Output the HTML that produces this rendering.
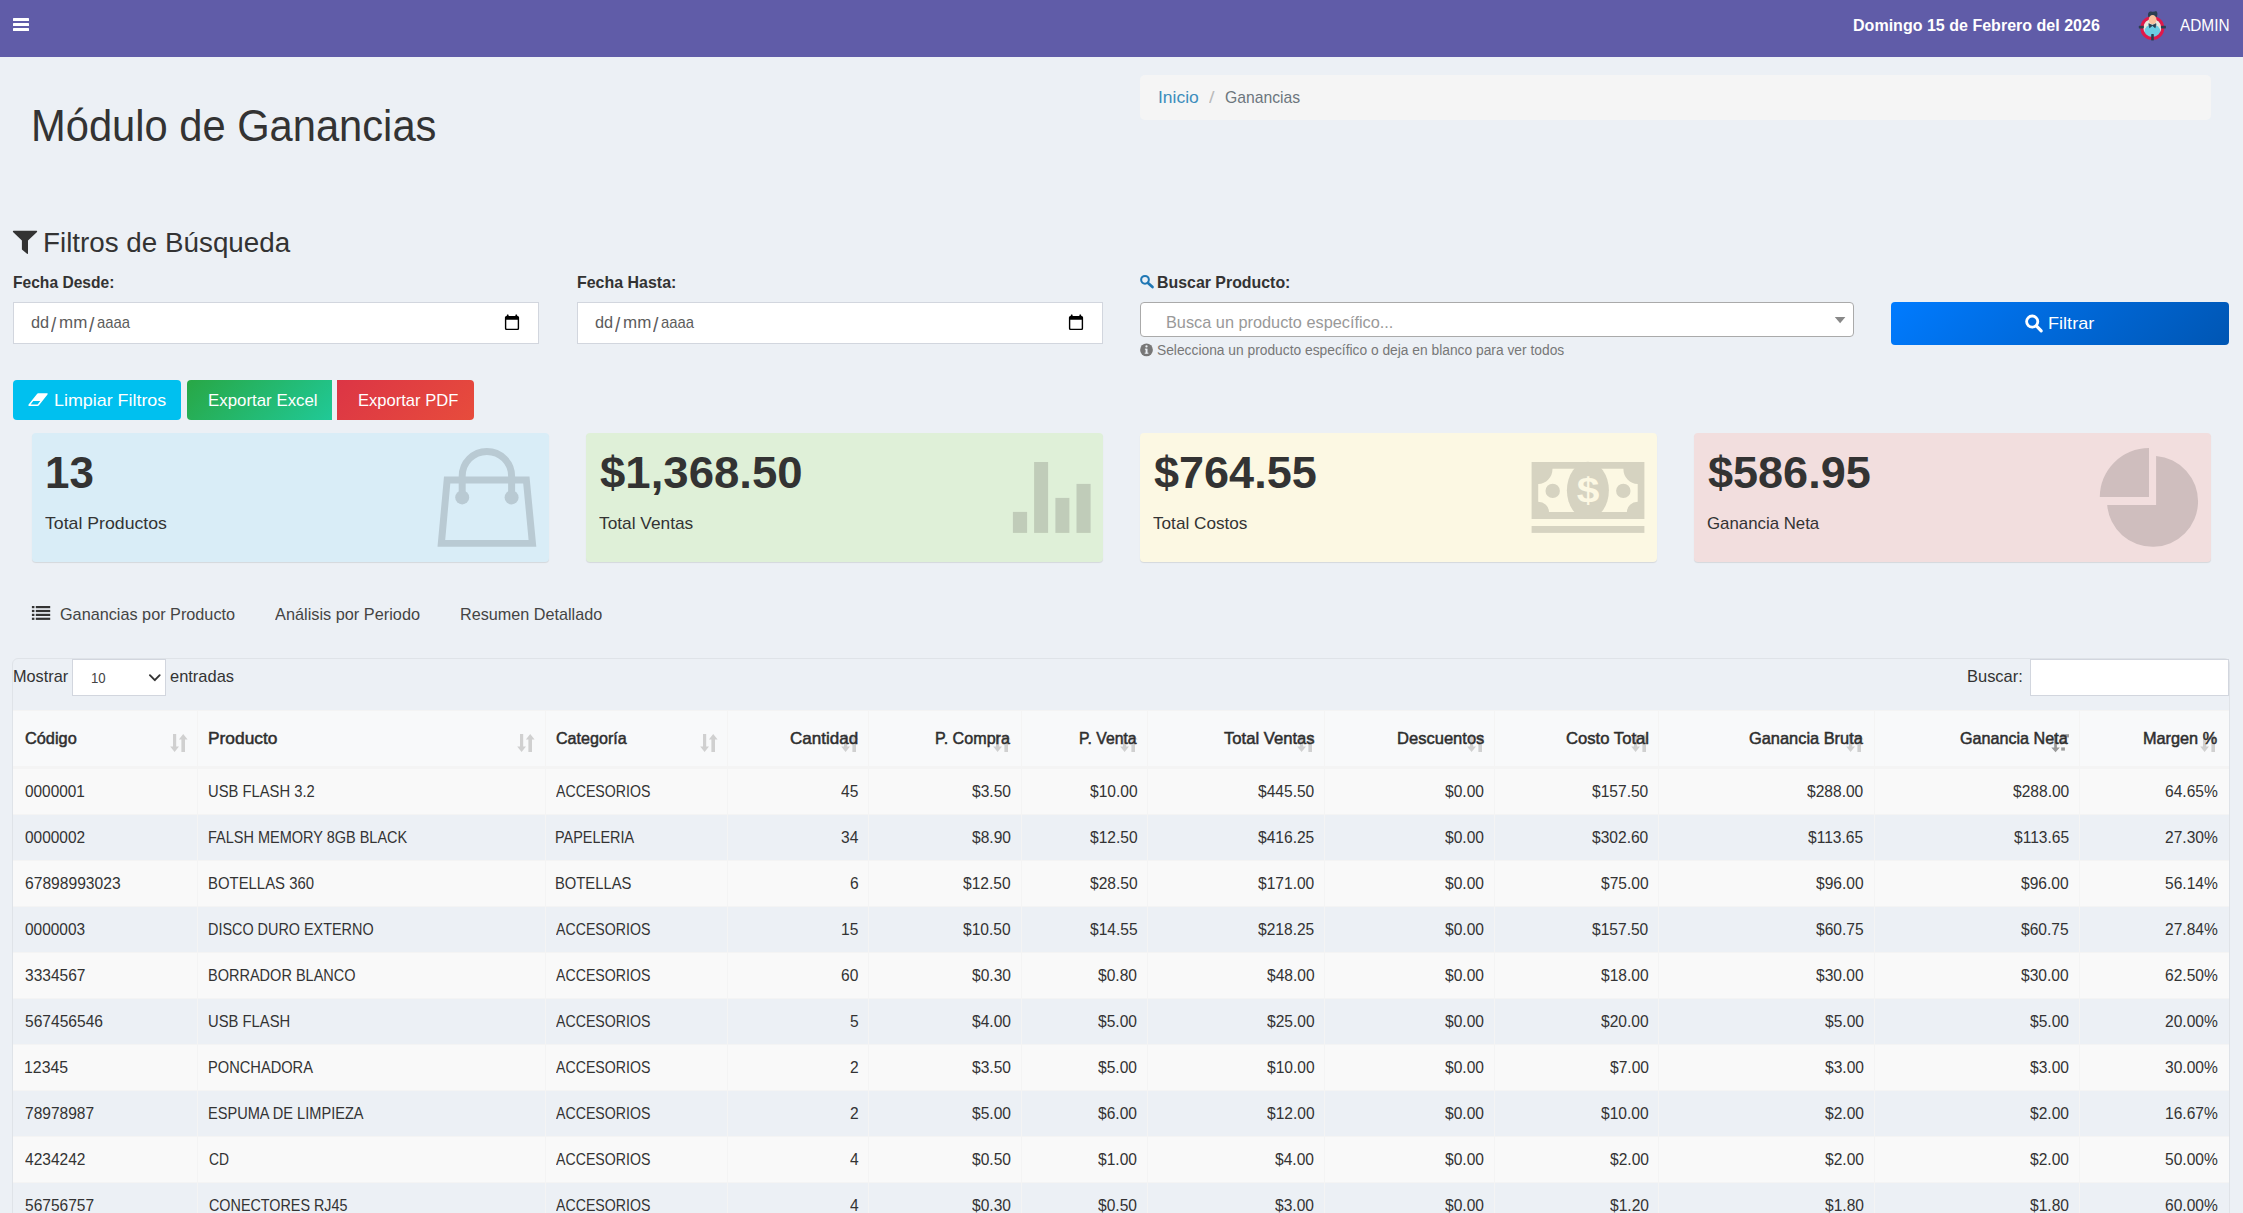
<!DOCTYPE html>
<html lang="es"><head><meta charset="utf-8"><title>Módulo de Ganancias</title>
<style>
html,body{margin:0;padding:0}
html{width:2243px;height:1213px;overflow:hidden}
body{width:2243px;height:1213px;overflow:hidden;position:relative;background:#ecf0f5;font-family:"Liberation Sans",sans-serif;color:#333}
.a{position:absolute;box-sizing:border-box}
.t{position:absolute;white-space:pre;line-height:1;transform-origin:0 0;font-family:"Liberation Sans",sans-serif}
svg{position:absolute;overflow:visible}
.nav{left:0;top:0;width:2243px;height:57px;background:#605ca8}
.crumb{left:1140px;top:75px;width:1071px;height:45px;background:#f5f5f5;border-radius:5px}
.inp{background:#fff;border:1px solid #d2d6de}
.sel2{background:#fff;border:1px solid #aaa;border-radius:4px}
.btn{border-radius:4px}
.sbox{top:433px;height:129px;border-radius:4px;box-shadow:0 1px 1px rgba(0,0,0,.1)}
.row{left:13px;width:2216px;height:46px;border-top:1px solid #f4f4f4}
.odd{background:#f9f9f9}
.vl{top:710px;width:1px;height:520px;background:#f4f4f4}
h1.t,h3.t,p.t,label.t,small.t,b.t,a.t{margin:0;padding:0;font-weight:400;text-decoration:none;display:block}
#app{position:absolute;left:0;top:0;width:2243px;height:1213px;overflow:hidden}

</style></head>
<body>
<div id="app">
<nav>
<div class="a nav"></div>
<svg style="left:0;top:0" width="60" height="57"><rect x="13" y="18" width="16" height="3" rx=".6" fill="#fff"/><rect x="13" y="23" width="16" height="3" rx=".6" fill="#fff"/><rect x="13" y="28" width="16" height="3" rx=".6" fill="#fff"/></svg>
<svg style="left:2136px;top:9px" width="32" height="34" viewBox="2136 9 32 34">
 <circle cx="2152.3" cy="27.9" r="9.4" fill="#e9e9df"/>
 <ellipse cx="2152.4" cy="31.6" rx="8" ry="7.2" fill="#6bcde4"/>
 <circle cx="2152.3" cy="27.9" r="10.5" fill="none" stroke="#e0184a" stroke-width="3"/>
 <path d="M2148.3 17 C2147.2 12.8 2149.3 11.2 2152 11.7 C2153.8 11.9 2155 11.5 2156.2 11 C2157.9 12.4 2157.6 15 2156.8 17 Z" fill="#2c3e50"/>
 <ellipse cx="2152.6" cy="19.8" rx="3.9" ry="4.7" fill="#f9c29e"/>
 <path d="M2152.4 25.5 L2148.8 23.7 L2149.6 27.7 Z M2152.4 25.5 L2156 23.7 L2155.2 27.7 Z" fill="#2c3e50" stroke="#2c3e50" stroke-width=".8" stroke-linejoin="round"/>
 <rect x="2138.8" y="25.8" width="5" height="2.6" rx=".6" fill="#2c3e50"/>
 <rect x="2160.9" y="25.8" width="5" height="2.6" rx=".6" fill="#2c3e50"/>
 <rect x="2151.2" y="34" width="2.6" height="6.6" rx=".6" fill="#2c3e50"/>
</svg>
<span class="t" style="font-size:17.2px;top:17.38px;color:#fff;font-weight:700;left:1852.87px;transform:scaleX(0.9330);">Domingo 15 de Febrero del 2026</span>
<span class="t" style="font-size:17.0px;top:16.55px;color:#fff;left:2180.40px;transform:scaleX(0.9047);">ADMIN</span>
</nav>
<header>
<div class="a crumb"></div>
<h1 class="t" style="font-size:44.8px;top:102.92px;color:#333;left:30.91px;transform:scaleX(0.9302);">Módulo de Ganancias</h1>
<a class="t" style="font-size:16.6px;top:89.89px;color:#3c8dbc;left:1158.15px;transform:scaleX(1.0531);">Inicio</a>
<span class="t" style="font-size:16.6px;top:89.89px;color:#bbb;left:1209.00px;transform:scaleX(1.2000);">/</span>
<span class="t" style="font-size:16.6px;top:89.89px;color:#6c757d;left:1225.40px;transform:scaleX(0.9477);">Ganancias</span>
</header>
<section class="filters">
<svg style="left:0;top:220px" width="60" height="45" viewBox="0 220 60 45"><path d="M13.4 230.8 H36.7 Q37.6 231 37 231.9 L28 240.6 V253.6 Q27.8 254.4 27 253.8 L22.2 249.8 Q21.9 249.5 21.9 249 V240.6 L13 231.9 Q12.5 231 13.4 230.8 Z" fill="#333"/></svg>
<svg style="left:1138px;top:273px" width="18" height="18" viewBox="1138 273 18 18"><circle cx="1145" cy="279.8" r="3.85" fill="none" stroke="#1f77b4" stroke-width="2.05"/><path d="M1148 282.9 L1152.5 287.1" stroke="#1f77b4" stroke-width="2.7" stroke-linecap="round"/></svg>
<div class="a inp" style="left:13px;top:302px;width:526px;height:42px"></div>
<div class="a inp" style="left:577px;top:302px;width:526px;height:42px"></div>
<svg style="left:503px;top:313px" width="18" height="20" viewBox="0 0 18 20"><path d="M3.4 3.1 H14.6 Q16.1 3.1 16.1 4.6 V15.6 Q16.1 17.1 14.6 17.1 H3.4 Q1.9 17.1 1.9 15.6 V4.6 Q1.9 3.1 3.4 3.1 Z M3.3 6.8 V15.3 Q3.3 15.7 3.7 15.7 H14.3 Q14.7 15.7 14.7 15.3 V6.8 Z" fill="#000" fill-rule="evenodd"/><rect x="3.8" y="1.6" width="1.8" height="2.4" rx=".4" fill="#000"/><rect x="12.4" y="1.6" width="1.8" height="2.4" rx=".4" fill="#000"/></svg>
<svg style="left:1067px;top:313px" width="18" height="20" viewBox="0 0 18 20"><path d="M3.4 3.1 H14.6 Q16.1 3.1 16.1 4.6 V15.6 Q16.1 17.1 14.6 17.1 H3.4 Q1.9 17.1 1.9 15.6 V4.6 Q1.9 3.1 3.4 3.1 Z M3.3 6.8 V15.3 Q3.3 15.7 3.7 15.7 H14.3 Q14.7 15.7 14.7 15.3 V6.8 Z" fill="#000" fill-rule="evenodd"/><rect x="3.8" y="1.6" width="1.8" height="2.4" rx=".4" fill="#000"/><rect x="12.4" y="1.6" width="1.8" height="2.4" rx=".4" fill="#000"/></svg>
<div class="a sel2" style="left:1140px;top:302px;width:714px;height:35px"></div>
<svg style="left:1832px;top:314px" width="16" height="12" viewBox="1832 314 16 12"><path d="M1834.8 317 H1845.4 L1840.1 323.2 Z" fill="#888"/></svg>
<svg style="left:1138px;top:341px" width="18" height="18" viewBox="1138 341 18 18"><circle cx="1146.5" cy="349.9" r="6.4" fill="#777"/><rect x="1145.6" y="348.7" width="1.9" height="4.6" fill="#ecf0f5"/><rect x="1144.9" y="348.7" width="1.6" height="1" fill="#ecf0f5"/><rect x="1144.7" y="352.7" width="3.7" height="1" fill="#ecf0f5"/><circle cx="1146.5" cy="346.4" r="1.15" fill="#ecf0f5"/></svg>
<div class="a btn" style="left:1891px;top:302px;width:338px;height:43px;background:linear-gradient(135deg,#007bff,#0056b3)"></div>
<svg style="left:2022px;top:312px" width="24" height="24" viewBox="2022 312 24 24"><circle cx="2032.2" cy="321.6" r="5.6" fill="none" stroke="#fff" stroke-width="2.8"/><path d="M2036.6 326.2 L2041.2 330.8" stroke="#fff" stroke-width="3.2" stroke-linecap="round"/></svg>
<div class="a btn" style="left:13px;top:380px;width:168px;height:40px;background:#00c0ef"></div>
<svg style="left:26px;top:390px" width="26" height="20" viewBox="26 390 26 20"><path d="M38.2 393.3 H46.9 Q48.4 393.3 47.5 394.6 L39 405.3 Q38.5 405.9 37.7 405.9 H29.2 Q27.6 405.9 28.6 404.6 L37 393.9 Q37.5 393.3 38.2 393.3 Z M33.3 401.1 L30.6 404.6 H37.6 L40.3 401.1 Z" fill="#fff" fill-rule="evenodd"/></svg>
<div class="a" style="left:187px;top:380px;width:145px;height:40px;border-radius:4px 0 0 4px;background:linear-gradient(135deg,#28a745,#20c997)"></div>
<div class="a" style="left:337px;top:380px;width:137px;height:40px;border-radius:0 4px 4px 0;background:linear-gradient(135deg,#dc3545,#e74c3c)"></div>
<h3 class="t" style="font-size:28.4px;top:227.86px;color:#333;left:43.04px;transform:scaleX(0.9788);">Filtros de Búsqueda</h3>
<label class="t" style="font-size:16.6px;top:274.89px;color:#333;font-weight:700;left:13.46px;transform:scaleX(0.9395);">Fecha Desde:</label>
<label class="t" style="font-size:16.6px;top:274.89px;color:#333;font-weight:700;left:576.54px;transform:scaleX(0.9617);">Fecha Hasta:</label>
<label class="t" style="font-size:16.6px;top:274.89px;color:#333;font-weight:700;left:1156.54px;transform:scaleX(0.9583);">Buscar Producto:</label>
<span class="t" style="font-size:16.6px;top:314.89px;color:#5c5c5c;left:31.00px;transform:scaleX(0.9820);">dd</span>
<span class="t" style="font-size:20.8px;top:315.32px;color:#5c5c5c;left:51.10px;transform:scaleX(0.9000);">/</span>
<span class="t" style="font-size:16.6px;top:314.89px;color:#5c5c5c;left:58.78px;transform:scaleX(1.0224);">mm</span>
<span class="t" style="font-size:20.8px;top:315.32px;color:#5c5c5c;left:89.10px;transform:scaleX(0.9333);">/</span>
<span class="t" style="font-size:16.6px;top:314.89px;color:#5c5c5c;left:97.10px;transform:scaleX(0.8942);">aaaa</span>
<span class="t" style="font-size:16.6px;top:314.89px;color:#5c5c5c;left:595.00px;transform:scaleX(0.9820);">dd</span>
<span class="t" style="font-size:20.8px;top:315.32px;color:#5c5c5c;left:615.10px;transform:scaleX(0.9000);">/</span>
<span class="t" style="font-size:16.6px;top:314.89px;color:#5c5c5c;left:622.78px;transform:scaleX(1.0224);">mm</span>
<span class="t" style="font-size:20.8px;top:315.32px;color:#5c5c5c;left:653.10px;transform:scaleX(0.9333);">/</span>
<span class="t" style="font-size:16.6px;top:314.89px;color:#5c5c5c;left:661.10px;transform:scaleX(0.8942);">aaaa</span>
<span class="t" style="font-size:16.6px;top:314.89px;color:#999;left:1166.02px;transform:scaleX(0.9821);">Busca un producto específico...</span>
<small class="t" style="font-size:14px;top:343.10px;color:#777;left:1156.50px;transform:scaleX(0.9853);">Selecciona un producto específico o deja en blanco para ver todos</small>
<b class="t" role="button" style="font-size:16.6px;top:315.89px;color:#fff;left:2048.21px;transform:scaleX(1.0914);">Filtrar</b>
<b class="t" role="button" style="font-size:16.6px;top:392.89px;color:#fff;left:53.82px;transform:scaleX(1.0769);">Limpiar Filtros</b>
<b class="t" role="button" style="font-size:16.6px;top:392.89px;color:#fff;left:208.18px;transform:scaleX(1.0159);">Exportar Excel</b>
<b class="t" role="button" style="font-size:16.6px;top:392.89px;color:#fff;left:358.00px;transform:scaleX(0.9982);">Exportar PDF</b>
</section>
<section class="stats">
<div class="a sbox" style="left:32px;width:517px;background:#d9edf7"></div>
<div class="a sbox" style="left:586px;width:517px;background:#dff0d8"></div>
<div class="a sbox" style="left:1140px;width:517px;background:#fcf8e3"></div>
<div class="a sbox" style="left:1694px;width:517px;background:#f2dede"></div>
<svg style="left:430px;top:440px" width="115" height="115" viewBox="430 440 115 115"><path fill="#b9cad3" fill-rule="evenodd" d="M444 476.5 H529.5 L536.3 546.8 H437.5 Z M450.3 483.5 L445.2 540 H528.6 L523.2 483.5 Z"/><path d="M462.2 497 V476.1 A24.7 24.7 0 0 1 511.6 476.1 V497" fill="none" stroke="#b9cad3" stroke-width="7"/><circle cx="462.2" cy="497.4" r="7" fill="#b9cad3"/><circle cx="511.6" cy="497.4" r="7" fill="#b9cad3"/></svg>
<svg style="left:1005px;top:455px" width="95" height="85" viewBox="1005 455 95 85"><g fill="#c0ccb9"><rect x="1012.9" y="511.9" width="14.2" height="21"/><rect x="1034.1" y="462" width="14" height="70.9"/><rect x="1055.4" y="497.9" width="14" height="35"/><rect x="1076.5" y="483.9" width="14.1" height="49"/></g></svg>
<svg style="left:1525px;top:455px" width="125" height="85" viewBox="1525 455 125 85"><g fill="#d6d3c1"><path fill-rule="evenodd" d="M1531.6 461.9 H1644.4 V518.9 H1531.6 Z M1552.5 468.8 H1623.4 A14.3 15.3 0 0 0 1637.7 484.1 V501.8 A10.8 10.2 0 0 0 1626.9 512 H1549 A10.8 10.2 0 0 0 1538.2 501.8 V484.1 A14.3 15.3 0 0 0 1552.5 468.8 Z"/><ellipse cx="1587.9" cy="490.3" rx="21" ry="28.5"/><circle cx="1552.7" cy="490.9" r="7.2"/><circle cx="1623.3" cy="490.9" r="7.2"/><rect x="1531.6" y="526" width="112.8" height="6.9"/></g><text x="1588" y="501.6" font-family="Liberation Sans, sans-serif" font-weight="700" font-size="34.5" fill="#fcf8e3" text-anchor="middle" transform="translate(1588 0) scale(1.18 1) translate(-1588 0)">$</text></svg>
<svg style="left:2095px;top:445px" width="108" height="106" viewBox="2095 445 108 106"><g fill="#cfbebe"><path d="M2149 496.9 H2099.8 A49.2 48.8 0 0 1 2149 448.1 Z"/><path d="M2156.1 456 A45.5 45.5 0 1 1 2107.2 505 H2156.1 Z"/></g></svg>
<h3 class="t" style="font-size:44.8px;top:449.92px;color:#333;font-weight:700;left:44.94px;transform:scaleX(0.9805);">13</h3>
<h3 class="t" style="font-size:44.8px;top:449.92px;color:#333;font-weight:700;left:600.00px;transform:scaleX(1.0168);">$1,368.50</h3>
<h3 class="t" style="font-size:44.8px;top:449.92px;color:#333;font-weight:700;left:1154.20px;transform:scaleX(1.0049);">$764.55</h3>
<h3 class="t" style="font-size:44.8px;top:449.92px;color:#333;font-weight:700;left:1708.00px;transform:scaleX(1.0049);">$586.95</h3>
<p class="t" style="font-size:16.6px;top:515.89px;color:#333;left:45.40px;transform:scaleX(1.0660);">Total Productos</p>
<p class="t" style="font-size:16.6px;top:515.89px;color:#333;left:599.20px;transform:scaleX(1.0421);">Total Ventas</p>
<p class="t" style="font-size:16.6px;top:515.89px;color:#333;left:1153.20px;transform:scaleX(1.0340);">Total Costos</p>
<p class="t" style="font-size:16.6px;top:515.89px;color:#333;left:1707.00px;transform:scaleX(1.0138);">Ganancia Neta</p>
</section>
<section class="report">
<svg style="left:30px;top:604px" width="22" height="18" viewBox="30 604 22 18"><g fill="#333"><rect x="31.9" y="606" width="2.5" height="2.2"/><rect x="35.8" y="606" width="14.4" height="2.2"/><rect x="31.9" y="609.9" width="2.5" height="2.2"/><rect x="35.8" y="609.9" width="14.4" height="2.2"/><rect x="31.9" y="613.8" width="2.5" height="2.2"/><rect x="35.8" y="613.8" width="14.4" height="2.2"/><rect x="31.9" y="617.7" width="2.5" height="2.2"/><rect x="35.8" y="617.7" width="14.4" height="2.2"/></g></svg>
<div class="a" style="left:12px;top:658px;width:2218px;height:600px;border:1px solid #dfe3e8;border-radius:6px"></div>
<div class="a inp" style="left:72px;top:659px;width:94px;height:37px"></div>
<svg style="left:146px;top:670px" width="18" height="16" viewBox="146 670 18 16"><path d="M149.9 675.2 L154.8 680.2 L159.7 675.2" fill="none" stroke="#333" stroke-width="1.9" stroke-linecap="round" stroke-linejoin="round"/></svg>
<div class="a inp" style="left:2030px;top:659px;width:199px;height:37px"></div>
<div class="a" style="left:13px;top:710px;width:2216px;height:56px;background:#f8f9fa;border-top:1px solid #f4f4f4"></div>
<div class="a" style="left:13px;top:766px;width:2216px;height:3px;background:#f4f4f4"></div>
<div class="a row odd" style="top:768px;height:47px"></div>
<div class="a row" style="top:814px;height:47px"></div>
<div class="a row odd" style="top:860px;height:47px"></div>
<div class="a row" style="top:906px;height:47px"></div>
<div class="a row odd" style="top:952px;height:47px"></div>
<div class="a row" style="top:998px;height:47px"></div>
<div class="a row odd" style="top:1044px;height:47px"></div>
<div class="a row" style="top:1090px;height:47px"></div>
<div class="a row odd" style="top:1136px;height:47px"></div>
<div class="a row" style="top:1182px;height:47px"></div>
<div class="a vl" style="left:197px"></div>
<div class="a vl" style="left:545px"></div>
<div class="a vl" style="left:727px"></div>
<div class="a vl" style="left:868px"></div>
<div class="a vl" style="left:1021px"></div>
<div class="a vl" style="left:1147px"></div>
<div class="a vl" style="left:1324px"></div>
<div class="a vl" style="left:1494px"></div>
<div class="a vl" style="left:1658px"></div>
<div class="a vl" style="left:1874px"></div>
<div class="a vl" style="left:2079px"></div>
<svg style="left:169.8px;top:734.2px" width="18" height="19" viewBox="0 0 18 19"><path d="M3 0 H6.2 V12.6 H9 L4.6 18 L0.2 12.6 H3 Z" fill="#d0d0d0"/><path d="M11.4 18 H15 V5.4 H17.6 L13.2 0 L8.9 5.4 H11.4 Z" fill="#d0d0d0"/></svg>
<svg style="left:517.3px;top:734.2px" width="18" height="19" viewBox="0 0 18 19"><path d="M3 0 H6.2 V12.6 H9 L4.6 18 L0.2 12.6 H3 Z" fill="#d0d0d0"/><path d="M11.4 18 H15 V5.4 H17.6 L13.2 0 L8.9 5.4 H11.4 Z" fill="#d0d0d0"/></svg>
<svg style="left:699.8px;top:734.2px" width="18" height="19" viewBox="0 0 18 19"><path d="M3 0 H6.2 V12.6 H9 L4.6 18 L0.2 12.6 H3 Z" fill="#d0d0d0"/><path d="M11.4 18 H15 V5.4 H17.6 L13.2 0 L8.9 5.4 H11.4 Z" fill="#d0d0d0"/></svg>
<svg style="left:840.8px;top:734.2px" width="18" height="19" viewBox="0 0 18 19"><path d="M3 0 H6.2 V12.6 H9 L4.6 18 L0.2 12.6 H3 Z" fill="#d0d0d0"/><path d="M11.4 18 H15 V5.4 H17.6 L13.2 0 L8.9 5.4 H11.4 Z" fill="#d0d0d0"/></svg>
<svg style="left:993.2px;top:734.2px" width="18" height="19" viewBox="0 0 18 19"><path d="M3 0 H6.2 V12.6 H9 L4.6 18 L0.2 12.6 H3 Z" fill="#d0d0d0"/><path d="M11.4 18 H15 V5.4 H17.6 L13.2 0 L8.9 5.4 H11.4 Z" fill="#d0d0d0"/></svg>
<svg style="left:1119.5px;top:734.2px" width="18" height="19" viewBox="0 0 18 19"><path d="M3 0 H6.2 V12.6 H9 L4.6 18 L0.2 12.6 H3 Z" fill="#d0d0d0"/><path d="M11.4 18 H15 V5.4 H17.6 L13.2 0 L8.9 5.4 H11.4 Z" fill="#d0d0d0"/></svg>
<svg style="left:1296.5px;top:734.2px" width="18" height="19" viewBox="0 0 18 19"><path d="M3 0 H6.2 V12.6 H9 L4.6 18 L0.2 12.6 H3 Z" fill="#d0d0d0"/><path d="M11.4 18 H15 V5.4 H17.6 L13.2 0 L8.9 5.4 H11.4 Z" fill="#d0d0d0"/></svg>
<svg style="left:1466.5px;top:734.2px" width="18" height="19" viewBox="0 0 18 19"><path d="M3 0 H6.2 V12.6 H9 L4.6 18 L0.2 12.6 H3 Z" fill="#d0d0d0"/><path d="M11.4 18 H15 V5.4 H17.6 L13.2 0 L8.9 5.4 H11.4 Z" fill="#d0d0d0"/></svg>
<svg style="left:1630.8px;top:734.2px" width="18" height="19" viewBox="0 0 18 19"><path d="M3 0 H6.2 V12.6 H9 L4.6 18 L0.2 12.6 H3 Z" fill="#d0d0d0"/><path d="M11.4 18 H15 V5.4 H17.6 L13.2 0 L8.9 5.4 H11.4 Z" fill="#d0d0d0"/></svg>
<svg style="left:1845.8px;top:734.2px" width="18" height="19" viewBox="0 0 18 19"><path d="M3 0 H6.2 V12.6 H9 L4.6 18 L0.2 12.6 H3 Z" fill="#d0d0d0"/><path d="M11.4 18 H15 V5.4 H17.6 L13.2 0 L8.9 5.4 H11.4 Z" fill="#d0d0d0"/></svg>
<svg style="left:2051px;top:734px" width="19" height="19" viewBox="2051 734 19 19"><g fill="#999"><path d="M2054.2 734.2 H2056.9 V747.6 H2059.8 L2055.55 752.2 L2051.3 747.6 H2054.2 Z"/><rect x="2061.2" y="734.2" width="7.8" height="3.2"/><rect x="2061.2" y="740.8" width="5.3" height="3.2"/><rect x="2061.2" y="747.4" width="3.7" height="3.2"/></g></svg>
<svg style="left:2200.3px;top:734.2px" width="18" height="19" viewBox="0 0 18 19"><path d="M3 0 H6.2 V12.6 H9 L4.6 18 L0.2 12.6 H3 Z" fill="#d0d0d0"/><path d="M11.4 18 H15 V5.4 H17.6 L13.2 0 L8.9 5.4 H11.4 Z" fill="#d0d0d0"/></svg>
<a class="t" role="tab" style="font-size:16.6px;top:606.89px;color:#444;left:59.90px;transform:scaleX(0.9781);">Ganancias por Producto</a>
<a class="t" role="tab" style="font-size:16.6px;top:606.89px;color:#444;left:275.20px;transform:scaleX(0.9827);">Análisis por Periodo</a>
<a class="t" role="tab" style="font-size:16.6px;top:606.89px;color:#444;left:460.02px;transform:scaleX(0.9757);">Resumen Detallado</a>
<label class="t" style="font-size:16.6px;top:668.89px;color:#333;left:13.22px;transform:scaleX(0.9800);">Mostrar</label>
<span class="t" style="font-size:13.8px;top:672.27px;color:#444;left:90.65px;transform:scaleX(0.9541);">10</span>
<label class="t" style="font-size:16.6px;top:668.89px;color:#333;left:170.30px;transform:scaleX(0.9910);">entradas</label>
<label class="t" style="font-size:16.6px;top:668.89px;color:#333;left:1967.41px;transform:scaleX(0.9919);">Buscar:</label>
<span class="t" role="columnheader" style="font-size:16.6px;top:730.89px;color:#2e2e2e;-webkit-text-stroke:0.5px #2e2e2e;left:24.70px;transform:scaleX(0.9836);">Código</span>
<span class="t" role="columnheader" style="font-size:16.6px;top:730.89px;color:#2e2e2e;-webkit-text-stroke:0.5px #2e2e2e;left:207.95px;transform:scaleX(1.0462);">Producto</span>
<span class="t" role="columnheader" style="font-size:16.6px;top:730.89px;color:#2e2e2e;-webkit-text-stroke:0.5px #2e2e2e;left:556.00px;transform:scaleX(0.9695);">Categoría</span>
<span class="t" role="columnheader" style="font-size:16.6px;top:730.89px;color:#2e2e2e;-webkit-text-stroke:0.5px #2e2e2e;left:790.20px;transform:scaleX(1.0258);">Cantidad</span>
<span class="t" role="columnheader" style="font-size:16.6px;top:730.89px;color:#2e2e2e;-webkit-text-stroke:0.5px #2e2e2e;left:935.03px;transform:scaleX(0.9709);">P. Compra</span>
<span class="t" role="columnheader" style="font-size:16.6px;top:730.89px;color:#2e2e2e;-webkit-text-stroke:0.5px #2e2e2e;left:1078.65px;transform:scaleX(0.9508);">P. Venta</span>
<span class="t" role="columnheader" style="font-size:16.6px;top:730.89px;color:#2e2e2e;-webkit-text-stroke:0.5px #2e2e2e;left:1223.60px;transform:scaleX(1.0032);">Total Ventas</span>
<span class="t" role="columnheader" style="font-size:16.6px;top:730.89px;color:#2e2e2e;-webkit-text-stroke:0.5px #2e2e2e;left:1396.90px;transform:scaleX(0.9973);">Descuentos</span>
<span class="t" role="columnheader" style="font-size:16.6px;top:730.89px;color:#2e2e2e;-webkit-text-stroke:0.5px #2e2e2e;left:1565.70px;transform:scaleX(1.0034);">Costo Total</span>
<span class="t" role="columnheader" style="font-size:16.6px;top:730.89px;color:#2e2e2e;-webkit-text-stroke:0.5px #2e2e2e;left:1748.70px;transform:scaleX(0.9873);">Ganancia Bruta</span>
<span class="t" role="columnheader" style="font-size:16.6px;top:730.89px;color:#2e2e2e;-webkit-text-stroke:0.5px #2e2e2e;left:1960.40px;transform:scaleX(0.9725);">Ganancia Neta</span>
<span class="t" role="columnheader" style="font-size:16.6px;top:730.89px;color:#2e2e2e;-webkit-text-stroke:0.5px #2e2e2e;left:2143.42px;transform:scaleX(0.9803);">Margen %</span>
<span class="t" role="cell" style="font-size:16.6px;top:783.89px;color:#333;left:24.70px;transform:scaleX(0.9274);">0000001</span>
<span class="t" role="cell" style="font-size:16.6px;top:783.89px;color:#333;left:208.11px;transform:scaleX(0.8899);">USB FLASH 3.2</span>
<span class="t" role="cell" style="font-size:16.6px;top:783.89px;color:#333;left:556.00px;transform:scaleX(0.8537);">ACCESORIOS</span>
<span class="t" role="cell" style="font-size:16.6px;top:783.89px;color:#333;left:841.00px;transform:scaleX(0.9380);">45</span>
<span class="t" role="cell" style="font-size:16.6px;top:783.89px;color:#333;left:971.96px;transform:scaleX(0.9380);">$3.50</span>
<span class="t" role="cell" style="font-size:16.6px;top:783.89px;color:#333;left:1089.61px;transform:scaleX(0.9380);">$10.00</span>
<span class="t" role="cell" style="font-size:16.6px;top:783.89px;color:#333;left:1257.95px;transform:scaleX(0.9380);">$445.50</span>
<span class="t" role="cell" style="font-size:16.6px;top:783.89px;color:#333;left:1445.26px;transform:scaleX(0.9380);">$0.00</span>
<span class="t" role="cell" style="font-size:16.6px;top:783.89px;color:#333;left:1592.25px;transform:scaleX(0.9380);">$157.50</span>
<span class="t" role="cell" style="font-size:16.6px;top:783.89px;color:#333;left:1807.25px;transform:scaleX(0.9380);">$288.00</span>
<span class="t" role="cell" style="font-size:16.6px;top:783.89px;color:#333;left:2012.75px;transform:scaleX(0.9380);">$288.00</span>
<span class="t" role="cell" style="font-size:16.6px;top:783.89px;color:#333;left:2164.78px;transform:scaleX(0.9380);">64.65%</span>
<span class="t" role="cell" style="font-size:16.6px;top:829.89px;color:#333;left:24.70px;transform:scaleX(0.9305);">0000002</span>
<span class="t" role="cell" style="font-size:16.6px;top:829.89px;color:#333;left:208.13px;transform:scaleX(0.8732);">FALSH MEMORY 8GB BLACK</span>
<span class="t" role="cell" style="font-size:16.6px;top:829.89px;color:#333;left:555.13px;transform:scaleX(0.8688);">PAPELERIA</span>
<span class="t" role="cell" style="font-size:16.6px;top:829.89px;color:#333;left:841.00px;transform:scaleX(0.9380);">34</span>
<span class="t" role="cell" style="font-size:16.6px;top:829.89px;color:#333;left:971.96px;transform:scaleX(0.9380);">$8.90</span>
<span class="t" role="cell" style="font-size:16.6px;top:829.89px;color:#333;left:1089.61px;transform:scaleX(0.9380);">$12.50</span>
<span class="t" role="cell" style="font-size:16.6px;top:829.89px;color:#333;left:1257.95px;transform:scaleX(0.9380);">$416.25</span>
<span class="t" role="cell" style="font-size:16.6px;top:829.89px;color:#333;left:1445.26px;transform:scaleX(0.9380);">$0.00</span>
<span class="t" role="cell" style="font-size:16.6px;top:829.89px;color:#333;left:1592.25px;transform:scaleX(0.9380);">$302.60</span>
<span class="t" role="cell" style="font-size:16.6px;top:829.89px;color:#333;left:1808.41px;transform:scaleX(0.9380);">$113.65</span>
<span class="t" role="cell" style="font-size:16.6px;top:829.89px;color:#333;left:2013.91px;transform:scaleX(0.9380);">$113.65</span>
<span class="t" role="cell" style="font-size:16.6px;top:829.89px;color:#333;left:2164.78px;transform:scaleX(0.9380);">27.30%</span>
<span class="t" role="cell" style="font-size:16.6px;top:875.89px;color:#333;left:24.70px;transform:scaleX(0.9419);">67898993023</span>
<span class="t" role="cell" style="font-size:16.6px;top:875.89px;color:#333;left:208.10px;transform:scaleX(0.8978);">BOTELLAS 360</span>
<span class="t" role="cell" style="font-size:16.6px;top:875.89px;color:#333;left:555.11px;transform:scaleX(0.8902);">BOTELLAS</span>
<span class="t" role="cell" style="font-size:16.6px;top:875.89px;color:#333;left:849.66px;transform:scaleX(0.9380);">6</span>
<span class="t" role="cell" style="font-size:16.6px;top:875.89px;color:#333;left:963.31px;transform:scaleX(0.9380);">$12.50</span>
<span class="t" role="cell" style="font-size:16.6px;top:875.89px;color:#333;left:1089.61px;transform:scaleX(0.9380);">$28.50</span>
<span class="t" role="cell" style="font-size:16.6px;top:875.89px;color:#333;left:1257.95px;transform:scaleX(0.9380);">$171.00</span>
<span class="t" role="cell" style="font-size:16.6px;top:875.89px;color:#333;left:1445.26px;transform:scaleX(0.9380);">$0.00</span>
<span class="t" role="cell" style="font-size:16.6px;top:875.89px;color:#333;left:1600.91px;transform:scaleX(0.9380);">$75.00</span>
<span class="t" role="cell" style="font-size:16.6px;top:875.89px;color:#333;left:1815.91px;transform:scaleX(0.9380);">$96.00</span>
<span class="t" role="cell" style="font-size:16.6px;top:875.89px;color:#333;left:2021.41px;transform:scaleX(0.9380);">$96.00</span>
<span class="t" role="cell" style="font-size:16.6px;top:875.89px;color:#333;left:2164.78px;transform:scaleX(0.9380);">56.14%</span>
<span class="t" role="cell" style="font-size:16.6px;top:921.89px;color:#333;left:24.70px;transform:scaleX(0.9305);">0000003</span>
<span class="t" role="cell" style="font-size:16.6px;top:921.89px;color:#333;left:208.13px;transform:scaleX(0.8677);">DISCO DURO EXTERNO</span>
<span class="t" role="cell" style="font-size:16.6px;top:921.89px;color:#333;left:556.00px;transform:scaleX(0.8537);">ACCESORIOS</span>
<span class="t" role="cell" style="font-size:16.6px;top:921.89px;color:#333;left:841.00px;transform:scaleX(0.9380);">15</span>
<span class="t" role="cell" style="font-size:16.6px;top:921.89px;color:#333;left:963.31px;transform:scaleX(0.9380);">$10.50</span>
<span class="t" role="cell" style="font-size:16.6px;top:921.89px;color:#333;left:1089.61px;transform:scaleX(0.9380);">$14.55</span>
<span class="t" role="cell" style="font-size:16.6px;top:921.89px;color:#333;left:1257.95px;transform:scaleX(0.9380);">$218.25</span>
<span class="t" role="cell" style="font-size:16.6px;top:921.89px;color:#333;left:1445.26px;transform:scaleX(0.9380);">$0.00</span>
<span class="t" role="cell" style="font-size:16.6px;top:921.89px;color:#333;left:1592.25px;transform:scaleX(0.9380);">$157.50</span>
<span class="t" role="cell" style="font-size:16.6px;top:921.89px;color:#333;left:1815.91px;transform:scaleX(0.9380);">$60.75</span>
<span class="t" role="cell" style="font-size:16.6px;top:921.89px;color:#333;left:2021.41px;transform:scaleX(0.9380);">$60.75</span>
<span class="t" role="cell" style="font-size:16.6px;top:921.89px;color:#333;left:2164.78px;transform:scaleX(0.9380);">27.84%</span>
<span class="t" role="cell" style="font-size:16.6px;top:967.89px;color:#333;left:24.70px;transform:scaleX(0.9352);">3334567</span>
<span class="t" role="cell" style="font-size:16.6px;top:967.89px;color:#333;left:208.13px;transform:scaleX(0.8747);">BORRADOR BLANCO</span>
<span class="t" role="cell" style="font-size:16.6px;top:967.89px;color:#333;left:556.00px;transform:scaleX(0.8537);">ACCESORIOS</span>
<span class="t" role="cell" style="font-size:16.6px;top:967.89px;color:#333;left:841.00px;transform:scaleX(0.9380);">60</span>
<span class="t" role="cell" style="font-size:16.6px;top:967.89px;color:#333;left:971.96px;transform:scaleX(0.9380);">$0.30</span>
<span class="t" role="cell" style="font-size:16.6px;top:967.89px;color:#333;left:1098.26px;transform:scaleX(0.9380);">$0.80</span>
<span class="t" role="cell" style="font-size:16.6px;top:967.89px;color:#333;left:1266.61px;transform:scaleX(0.9380);">$48.00</span>
<span class="t" role="cell" style="font-size:16.6px;top:967.89px;color:#333;left:1445.26px;transform:scaleX(0.9380);">$0.00</span>
<span class="t" role="cell" style="font-size:16.6px;top:967.89px;color:#333;left:1600.91px;transform:scaleX(0.9380);">$18.00</span>
<span class="t" role="cell" style="font-size:16.6px;top:967.89px;color:#333;left:1815.91px;transform:scaleX(0.9380);">$30.00</span>
<span class="t" role="cell" style="font-size:16.6px;top:967.89px;color:#333;left:2021.41px;transform:scaleX(0.9380);">$30.00</span>
<span class="t" role="cell" style="font-size:16.6px;top:967.89px;color:#333;left:2164.78px;transform:scaleX(0.9380);">62.50%</span>
<span class="t" role="cell" style="font-size:16.6px;top:1013.89px;color:#333;left:24.70px;transform:scaleX(0.9393);">567456546</span>
<span class="t" role="cell" style="font-size:16.6px;top:1013.89px;color:#333;left:208.11px;transform:scaleX(0.8911);">USB FLASH</span>
<span class="t" role="cell" style="font-size:16.6px;top:1013.89px;color:#333;left:556.00px;transform:scaleX(0.8537);">ACCESORIOS</span>
<span class="t" role="cell" style="font-size:16.6px;top:1013.89px;color:#333;left:849.66px;transform:scaleX(0.9380);">5</span>
<span class="t" role="cell" style="font-size:16.6px;top:1013.89px;color:#333;left:971.96px;transform:scaleX(0.9380);">$4.00</span>
<span class="t" role="cell" style="font-size:16.6px;top:1013.89px;color:#333;left:1098.26px;transform:scaleX(0.9380);">$5.00</span>
<span class="t" role="cell" style="font-size:16.6px;top:1013.89px;color:#333;left:1266.61px;transform:scaleX(0.9380);">$25.00</span>
<span class="t" role="cell" style="font-size:16.6px;top:1013.89px;color:#333;left:1445.26px;transform:scaleX(0.9380);">$0.00</span>
<span class="t" role="cell" style="font-size:16.6px;top:1013.89px;color:#333;left:1600.91px;transform:scaleX(0.9380);">$20.00</span>
<span class="t" role="cell" style="font-size:16.6px;top:1013.89px;color:#333;left:1824.56px;transform:scaleX(0.9380);">$5.00</span>
<span class="t" role="cell" style="font-size:16.6px;top:1013.89px;color:#333;left:2030.06px;transform:scaleX(0.9380);">$5.00</span>
<span class="t" role="cell" style="font-size:16.6px;top:1013.89px;color:#333;left:2164.78px;transform:scaleX(0.9380);">20.00%</span>
<span class="t" role="cell" style="font-size:16.6px;top:1059.89px;color:#333;left:23.74px;transform:scaleX(0.9551);">12345</span>
<span class="t" role="cell" style="font-size:16.6px;top:1059.89px;color:#333;left:208.12px;transform:scaleX(0.8825);">PONCHADORA</span>
<span class="t" role="cell" style="font-size:16.6px;top:1059.89px;color:#333;left:556.00px;transform:scaleX(0.8537);">ACCESORIOS</span>
<span class="t" role="cell" style="font-size:16.6px;top:1059.89px;color:#333;left:849.66px;transform:scaleX(0.9380);">2</span>
<span class="t" role="cell" style="font-size:16.6px;top:1059.89px;color:#333;left:971.96px;transform:scaleX(0.9380);">$3.50</span>
<span class="t" role="cell" style="font-size:16.6px;top:1059.89px;color:#333;left:1098.26px;transform:scaleX(0.9380);">$5.00</span>
<span class="t" role="cell" style="font-size:16.6px;top:1059.89px;color:#333;left:1266.61px;transform:scaleX(0.9380);">$10.00</span>
<span class="t" role="cell" style="font-size:16.6px;top:1059.89px;color:#333;left:1445.26px;transform:scaleX(0.9380);">$0.00</span>
<span class="t" role="cell" style="font-size:16.6px;top:1059.89px;color:#333;left:1609.56px;transform:scaleX(0.9380);">$7.00</span>
<span class="t" role="cell" style="font-size:16.6px;top:1059.89px;color:#333;left:1824.56px;transform:scaleX(0.9380);">$3.00</span>
<span class="t" role="cell" style="font-size:16.6px;top:1059.89px;color:#333;left:2030.06px;transform:scaleX(0.9380);">$3.00</span>
<span class="t" role="cell" style="font-size:16.6px;top:1059.89px;color:#333;left:2164.78px;transform:scaleX(0.9380);">30.00%</span>
<span class="t" role="cell" style="font-size:16.6px;top:1105.89px;color:#333;left:24.70px;transform:scaleX(0.9361);">78978987</span>
<span class="t" role="cell" style="font-size:16.6px;top:1105.89px;color:#333;left:208.12px;transform:scaleX(0.8786);">ESPUMA DE LIMPIEZA</span>
<span class="t" role="cell" style="font-size:16.6px;top:1105.89px;color:#333;left:556.00px;transform:scaleX(0.8537);">ACCESORIOS</span>
<span class="t" role="cell" style="font-size:16.6px;top:1105.89px;color:#333;left:849.66px;transform:scaleX(0.9380);">2</span>
<span class="t" role="cell" style="font-size:16.6px;top:1105.89px;color:#333;left:971.96px;transform:scaleX(0.9380);">$5.00</span>
<span class="t" role="cell" style="font-size:16.6px;top:1105.89px;color:#333;left:1098.26px;transform:scaleX(0.9380);">$6.00</span>
<span class="t" role="cell" style="font-size:16.6px;top:1105.89px;color:#333;left:1266.61px;transform:scaleX(0.9380);">$12.00</span>
<span class="t" role="cell" style="font-size:16.6px;top:1105.89px;color:#333;left:1445.26px;transform:scaleX(0.9380);">$0.00</span>
<span class="t" role="cell" style="font-size:16.6px;top:1105.89px;color:#333;left:1600.91px;transform:scaleX(0.9380);">$10.00</span>
<span class="t" role="cell" style="font-size:16.6px;top:1105.89px;color:#333;left:1824.56px;transform:scaleX(0.9380);">$2.00</span>
<span class="t" role="cell" style="font-size:16.6px;top:1105.89px;color:#333;left:2030.06px;transform:scaleX(0.9380);">$2.00</span>
<span class="t" role="cell" style="font-size:16.6px;top:1105.89px;color:#333;left:2164.78px;transform:scaleX(0.9380);">16.67%</span>
<span class="t" role="cell" style="font-size:16.6px;top:1151.89px;color:#333;left:24.70px;transform:scaleX(0.9352);">4234242</span>
<span class="t" role="cell" style="font-size:16.6px;top:1151.89px;color:#333;left:209.00px;transform:scaleX(0.8339);">CD</span>
<span class="t" role="cell" style="font-size:16.6px;top:1151.89px;color:#333;left:556.00px;transform:scaleX(0.8537);">ACCESORIOS</span>
<span class="t" role="cell" style="font-size:16.6px;top:1151.89px;color:#333;left:849.66px;transform:scaleX(0.9380);">4</span>
<span class="t" role="cell" style="font-size:16.6px;top:1151.89px;color:#333;left:971.96px;transform:scaleX(0.9380);">$0.50</span>
<span class="t" role="cell" style="font-size:16.6px;top:1151.89px;color:#333;left:1098.26px;transform:scaleX(0.9380);">$1.00</span>
<span class="t" role="cell" style="font-size:16.6px;top:1151.89px;color:#333;left:1275.26px;transform:scaleX(0.9380);">$4.00</span>
<span class="t" role="cell" style="font-size:16.6px;top:1151.89px;color:#333;left:1445.26px;transform:scaleX(0.9380);">$0.00</span>
<span class="t" role="cell" style="font-size:16.6px;top:1151.89px;color:#333;left:1609.56px;transform:scaleX(0.9380);">$2.00</span>
<span class="t" role="cell" style="font-size:16.6px;top:1151.89px;color:#333;left:1824.56px;transform:scaleX(0.9380);">$2.00</span>
<span class="t" role="cell" style="font-size:16.6px;top:1151.89px;color:#333;left:2030.06px;transform:scaleX(0.9380);">$2.00</span>
<span class="t" role="cell" style="font-size:16.6px;top:1151.89px;color:#333;left:2164.78px;transform:scaleX(0.9380);">50.00%</span>
<span class="t" role="cell" style="font-size:16.6px;top:1197.89px;color:#333;left:24.70px;transform:scaleX(0.9361);">56756757</span>
<span class="t" role="cell" style="font-size:16.6px;top:1197.89px;color:#333;left:209.00px;transform:scaleX(0.8649);">CONECTORES RJ45</span>
<span class="t" role="cell" style="font-size:16.6px;top:1197.89px;color:#333;left:556.00px;transform:scaleX(0.8537);">ACCESORIOS</span>
<span class="t" role="cell" style="font-size:16.6px;top:1197.89px;color:#333;left:849.66px;transform:scaleX(0.9380);">4</span>
<span class="t" role="cell" style="font-size:16.6px;top:1197.89px;color:#333;left:971.96px;transform:scaleX(0.9380);">$0.30</span>
<span class="t" role="cell" style="font-size:16.6px;top:1197.89px;color:#333;left:1098.26px;transform:scaleX(0.9380);">$0.50</span>
<span class="t" role="cell" style="font-size:16.6px;top:1197.89px;color:#333;left:1275.26px;transform:scaleX(0.9380);">$3.00</span>
<span class="t" role="cell" style="font-size:16.6px;top:1197.89px;color:#333;left:1445.26px;transform:scaleX(0.9380);">$0.00</span>
<span class="t" role="cell" style="font-size:16.6px;top:1197.89px;color:#333;left:1609.56px;transform:scaleX(0.9380);">$1.20</span>
<span class="t" role="cell" style="font-size:16.6px;top:1197.89px;color:#333;left:1824.56px;transform:scaleX(0.9380);">$1.80</span>
<span class="t" role="cell" style="font-size:16.6px;top:1197.89px;color:#333;left:2030.06px;transform:scaleX(0.9380);">$1.80</span>
<span class="t" role="cell" style="font-size:16.6px;top:1197.89px;color:#333;left:2164.78px;transform:scaleX(0.9380);">60.00%</span>
</section>
</div>
</body></html>
